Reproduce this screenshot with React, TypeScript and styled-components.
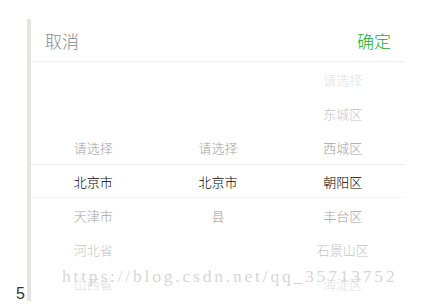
import React from 'react';
import styled, { createGlobalStyle } from 'styled-components';

const GlobalStyle = createGlobalStyle`
  html, body {
    margin: 0;
    padding: 0;
    background: #fff;
  }
  body {
    font-family: "Noto Sans CJK SC", "Noto Sans", sans-serif;
  }
`;

const Page = styled.div`
  position: relative;
  width: 438px;
  height: 308px;
  display: flex;
  align-items: flex-start;
  padding-top: 19px;
  box-sizing: border-box;
  overflow: hidden;
`;

const Gutter = styled.div`
  width: 27px;
  height: 282px;
  display: flex;
  align-items: flex-end;
  justify-content: flex-end;
  box-sizing: border-box;
  padding-right: 2px;
`;

const LineNo = styled.span`
  font-family: "Liberation Sans", Arial, sans-serif;
  font-size: 16px;
  line-height: 16px;
  color: #333;
  margin-bottom: -1px;
`;

const Frame = styled.div`
  border-left: 4px solid #e6e4df;
  width: 374px;
  height: 282px;
  overflow: hidden;
`;

const Header = styled.div`
  height: 43px;
  display: flex;
  align-items: center;
  justify-content: space-between;
  padding: 0 14px;
  border-bottom: 1px solid #f0f0f0;
  box-sizing: border-box;
`;

const HeaderButton = styled.span<{ $primary?: boolean }>`
  font-size: 17px;
  font-weight: 300;
  color: ${p => (p.$primary ? '#1aad19' : '#888')};
`;

const Wheel = styled.div`
  position: relative;
  display: grid;
  grid-template-columns: repeat(3, 1fr);
  height: 238px;
`;

const Highlight = styled.div`
  position: absolute;
  left: 0;
  right: 0;
  top: 102px;
  height: 34px;
  border-top: 1px solid #ececec;
  border-bottom: 1px solid #f2f2f2;
  box-sizing: border-box;
  pointer-events: none;
`;

const Column = styled.div`
  display: flex;
  flex-direction: column;
`;

const Item = styled.div<{ $dist: number }>`
  height: 34px;
  display: flex;
  align-items: center;
  justify-content: center;
  font-size: 13px;
  font-weight: 300;
  color: ${p =>
    p.$dist === 0 ? '#000' : p.$dist === 1 ? '#a3a3a3' : p.$dist === 2 ? '#c4c4c4' : '#dedede'};
`;

const Watermark = styled.div`
  position: absolute;
  left: 62px;
  top: 266px;
  font-family: "Liberation Serif", "DejaVu Serif", serif;
  font-size: 17.5px;
  letter-spacing: 2.8px;
  color: rgba(195, 195, 195, 0.7);
  white-space: nowrap;
  pointer-events: none;
`;

const SELECTED = 3;

const columns: (string | null)[][] = [
  [null, null, '请选择', '北京市', '天津市', '河北省', '山西省'],
  [null, null, '请选择', '北京市', '县', null, null],
  ['请选择', '东城区', '西城区', '朝阳区', '丰台区', '石景山区', '海淀区'],
];

export default function App() {
  return (
    <>
      <GlobalStyle />
      <Page>
        <Gutter>
          <LineNo>5</LineNo>
        </Gutter>
        <Frame>
          <Header>
            <HeaderButton>取消</HeaderButton>
            <HeaderButton $primary>确定</HeaderButton>
          </Header>
          <Wheel>
            <Highlight />
            {columns.map((col, ci) => (
              <Column key={ci}>
                {col.map((label, ri) => (
                  <Item key={ri} $dist={Math.abs(ri - SELECTED)}>
                    {label}
                  </Item>
                ))}
              </Column>
            ))}
          </Wheel>
        </Frame>
        <Watermark>https://blog.csdn.net/qq_35713752</Watermark>
      </Page>
    </>
  );
}
